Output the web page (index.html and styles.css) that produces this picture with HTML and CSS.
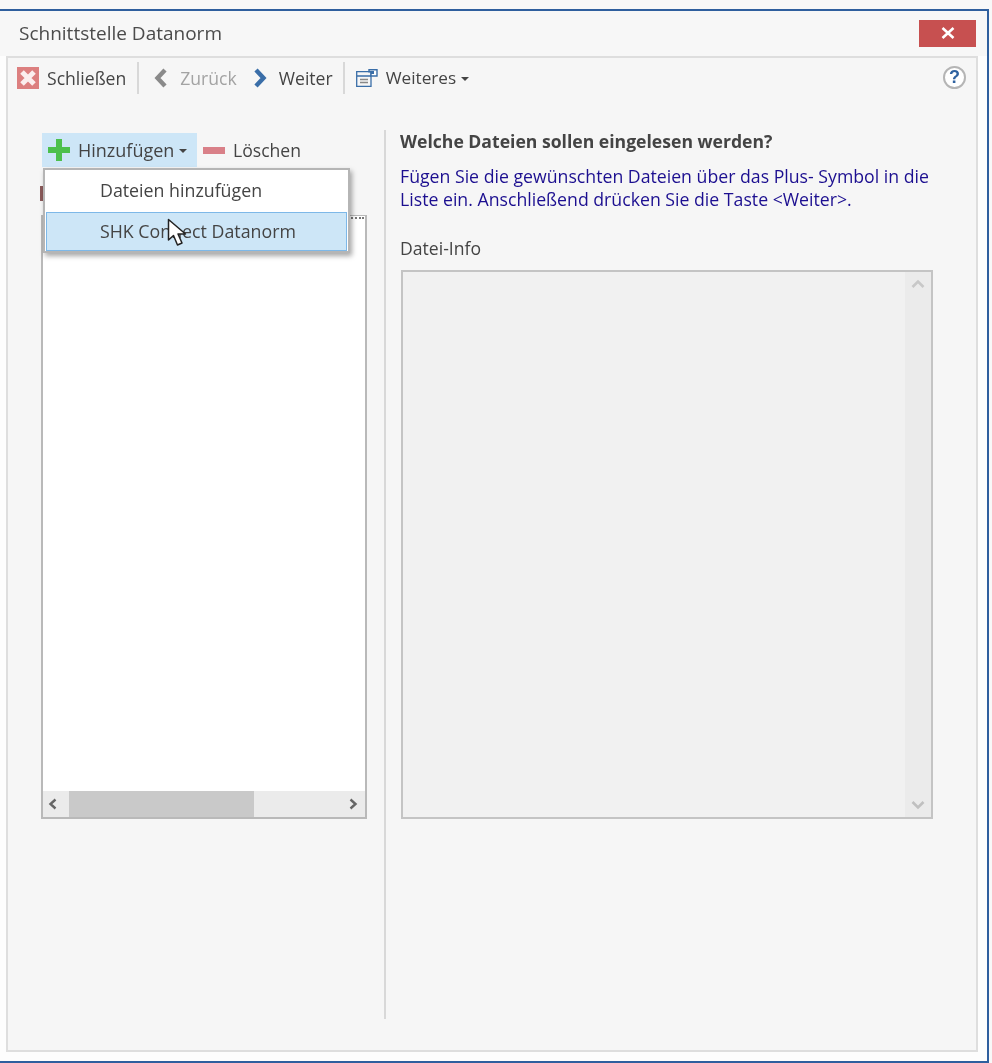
FILE: index.html
```html
<!DOCTYPE html>
<html lang="de">
<head>
<meta charset="utf-8">
<title>Schnittstelle Datanorm</title>
<link rel="stylesheet" href="styles.css">
</head>
<body>
<div class="window">
  <header class="titlebar">
    <span class="title">Schnittstelle Datanorm</span>
    <button class="close-btn" aria-label="Schließen">
      <svg width="14" height="12" viewBox="0 0 14 12"><path d="M1.5 1 L12.5 11 M12.5 1 L1.5 11" stroke="#fff" stroke-width="2.6" fill="none"/></svg>
    </button>
  </header>
  <section class="panel">
    <nav class="toolbar">
      <span class="tool tool-close">
        <svg width="22" height="22" viewBox="0 0 22 22"><rect width="22" height="22" fill="#dc7f7f"/><path d="M5 5 L17 17 M17 5 L5 17" stroke="#fbeeee" stroke-width="5"/></svg>
        Schließen
      </span>
      <i class="sep sep-a"></i>
      <span class="tool tool-back muted">
        <svg width="14" height="20" viewBox="0 0 14 20"><path d="M11 2 L3.5 10 L11 18" stroke="#8a8a8a" stroke-width="4.4" fill="none"/></svg>
        Zurück
      </span>
      <span class="tool tool-next">
        <svg width="14" height="20" viewBox="0 0 14 20"><path d="M3 2 L10.5 10 L3 18" stroke="#3a6ea8" stroke-width="4.4" fill="none"/></svg>
        Weiter
      </span>
      <i class="sep sep-b"></i>
      <span class="tool tool-more">
        <svg width="22" height="18" viewBox="0 0 22 18"><path d="M.7 2.7H15V17.3H.7Z M.7 7H15" stroke="#3a6ea8" stroke-width="1.3" fill="none"/><path d="M4 10.5H12 M4 13.5H12" stroke="#888" stroke-width="1.3"/><path d="M13 .8H21V7H15V2.7H13Z" fill="#fff" stroke="#3a6ea8" stroke-width="1.4"/><rect x="15" y="2" width="3" height="3" fill="#3a6ea8"/></svg>
        Weiteres<b class="caret"></b>
      </span>
      <span class="help">?</span>
    </nav>
    <div class="content">
      <div class="left">
        <div class="actions">
          <span class="act act-add">
            <svg width="22" height="22" viewBox="0 0 22 22"><path d="M8 0H14V8H22V14H14V22H8V14H0V8H8Z" fill="#4cc04c"/></svg>
            Hinzufügen<b class="caret"></b>
          </span>
          <span class="act act-del"><i class="minus"></i>Löschen</span>
        </div>
        <div class="listbox">
          <div class="dots"></div>
          <div class="list-body"></div>
          <div class="hscroll">
            <svg class="arrow" width="12" height="12" viewBox="0 0 12 12"><path d="M8.5 1.5 L3.5 6 L8.5 10.5" stroke="#666" stroke-width="2.4" fill="none"/></svg>
            <span class="thumb"></span>
            <svg class="arrow arrow-r" width="12" height="12" viewBox="0 0 12 12"><path d="M3.5 1.5 L8.5 6 L3.5 10.5" stroke="#666" stroke-width="2.4" fill="none"/></svg>
          </div>
        </div>
        <i class="peek"></i>
        <div class="menu">
          <div class="menu-item">Dateien hinzufügen</div>
          <div class="menu-item active">SHK Connect Datanorm</div>
        </div>
        <svg class="cursor" width="22" height="30" viewBox="0 0 22 30"><path d="M1.5 1.5 L1.5 22 L6.5 17.5 L10.5 27 L15 25 L11 16 L18.5 16 Z" fill="#fff" stroke="#222" stroke-width="1.5" stroke-linejoin="round"/></svg>
      </div>
      <div class="right">
        <h2 class="heading">Welche Dateien sollen eingelesen werden?</h2>
        <p class="hint">Fügen Sie die gewünschten Dateien über das Plus- Symbol in die Liste ein. Anschließend drücken Sie die Taste &lt;Weiter&gt;.</p>
        <div class="info-label">Datei-Info</div>
        <div class="infobox">
          <div class="info-body"></div>
          <div class="vscroll">
            <svg width="16" height="12" viewBox="0 0 16 12"><path d="M2.5 9 L8 3.5 L13.5 9" stroke="#c8c8c8" stroke-width="2.6" fill="none"/></svg>
            <svg width="16" height="12" viewBox="0 0 16 12"><path d="M2.5 3 L8 8.5 L13.5 3" stroke="#c0c0c0" stroke-width="2.6" fill="none"/></svg>
          </div>
        </div>
      </div>
    </div>
  </section>
</div>
</body>
</html>
```
FILE: styles.css
```css
* { box-sizing: border-box; }
html, body { margin: 0; height: 100%; }
body {
  background: #f8f8f8;
  padding-top: 9px;
  font-family: "Open Sans", "Noto Sans", sans-serif;
  font-size: 17.6px;
  color: #444;
  overflow: hidden;
}
.window {
  width: 989px;
  height: 1054px;
  background: #fdfdfd;
  border-top: 2px solid #2f5f9e;
  border-right: 2px solid #2f5f9e;
  border-bottom: 2px solid #2f5f9e;
  display: flex;
  flex-direction: column;
  filter: blur(.35px);
}
.titlebar {
  height: 45px;
  flex: none;
  background: #f7f7f7;
  display: flex;
  align-items: center;
  justify-content: space-between;
  padding: 0 11px 0 19px;
}
.title { font-size: 19px; color: #4b4b4b; margin-top: -2px; }
.close-btn {
  width: 57px;
  height: 27px;
  margin-top: -1px;
  border: 0;
  padding: 0;
  background: #c75050;
  display: flex;
  align-items: center;
  justify-content: center;
}
.panel {
  margin: 0 9px 9px 6px;
  flex: 1;
  border: 2px solid #dedede;
  background: #f6f6f6;
  display: flex;
  flex-direction: column;
}
.toolbar {
  height: 41px;
  flex: none;
  display: flex;
  align-items: center;
  padding: 0 10px 2px 9px;
}
.tool { display: flex; align-items: center; white-space: nowrap; }
.tool-close svg { margin-right: 8px; }
.tool-back { margin-left: 15px; }
.tool-back svg, .tool-next svg { margin-right: 12px; }
.tool-next { margin-left: 16px; }
.tool-more { margin-left: 11px; font-size: 17.2px; }
.tool-more svg { margin-right: 8px; }
.muted { color: #a3a3a3; }
.sep { width: 2px; height: 32px; background: #d8d8d8; flex: none; }
.sep-a { margin-left: 11px; }
.sep-b { margin-left: 10px; }
.caret {
  width: 0;
  height: 0;
  margin-left: 5px;
  margin-top: 2px;
  border-left: 4px solid transparent;
  border-right: 4px solid transparent;
  border-top: 4px solid #444;
}
.help {
  margin-left: auto;
  width: 23px;
  height: 23px;
  border: 2px solid #b5b5b5;
  border-radius: 50%;
  background: #fff;
  color: #2f62a0;
  font: bold 18px/19px "Liberation Sans", sans-serif;
  text-align: center;
}
.content { flex: 1; display: flex; align-items: stretch; }
.left {
  position: relative;
  width: 376px;
  flex: none;
  padding: 34px 0 0 34px;
}
.actions { display: flex; align-items: center; height: 34px; }
.act { display: flex; align-items: center; white-space: nowrap; height: 34px; }
.act-add { width: 155px; background: #cde6f7; padding-left: 6px; font-size: 18px; }
.act-add svg { margin-right: 8px; }
.act-del { margin-left: 6px; }
.minus { width: 22px; height: 7px; background: #d98088; margin-right: 8px; }
.listbox {
  width: 326px;
  height: 604px;
  margin-top: 48px;
  margin-left: -1px;
  border: 2px solid #b9b9b9;
  border-top-width: 1px;
  background: #fff;
  display: flex;
  flex-direction: column;
  position: relative;
}
.dots {
  position: absolute;
  top: 1px;
  right: 1px;
  width: 16px;
  border-top: 2px dotted #777;
}
.list-body { flex: 1; }
.hscroll {
  height: 26px;
  flex: none;
  background: #ebebeb;
  display: flex;
  align-items: center;
  position: relative;
}
.arrow { position: absolute; left: 4px; top: 7px; }
.arrow-r { left: auto; right: 6px; }
.thumb { margin-left: 26px; width: 185px; height: 100%; background: #c9c9c9; }
.peek { position: absolute; left: 32px; top: 87px; width: 3px; height: 15px; background: #8a5a5a; }
.menu {
  position: absolute;
  left: 35px;
  top: 69px;
  width: 307px;
  height: 85px;
  background: #fff;
  border: 2px solid #b5b5b5;
  box-shadow: 2px 3px 5px rgba(0, 0, 0, .35);
  padding: 1px;
}
.menu-item {
  height: 39px;
  padding: 0 0 2px 53px;
  display: flex;
  align-items: center;
  border: 1px solid transparent;
  font-size: 17.8px;
}
.menu-item.active { margin-top: 2px; background: #cde6f7; border: 1px solid #7db8e8; }
.cursor { position: absolute; left: 159px; top: 119px; }
.right {
  flex: 1;
  border-left: 2px solid #d8d8d8;
  margin: 31px 0 31px 0;
  padding: 0 40px 0 14px;
  display: flex;
  flex-direction: column;
}
.heading { margin: 0; font-size: 17.6px; line-height: 22px; font-weight: 700; color: #444; }
.hint { margin: 13px 0 0; font-size: 17.7px; line-height: 23px; color: #1c0f90; }
.info-label { margin-top: 26px; line-height: 22px; }
.infobox {
  width: 532px;
  height: 549px;
  margin-top: 11px;
  margin-left: 1px;
  border: 2px solid #c4c4c4;
  background: #f1f1f1;
  display: flex;
}
.info-body { flex: 1; }
.vscroll {
  width: 26px;
  background: #ebebeb;
  display: flex;
  flex-direction: column;
  justify-content: space-between;
  align-items: center;
  padding: 6px 0;
}
```
